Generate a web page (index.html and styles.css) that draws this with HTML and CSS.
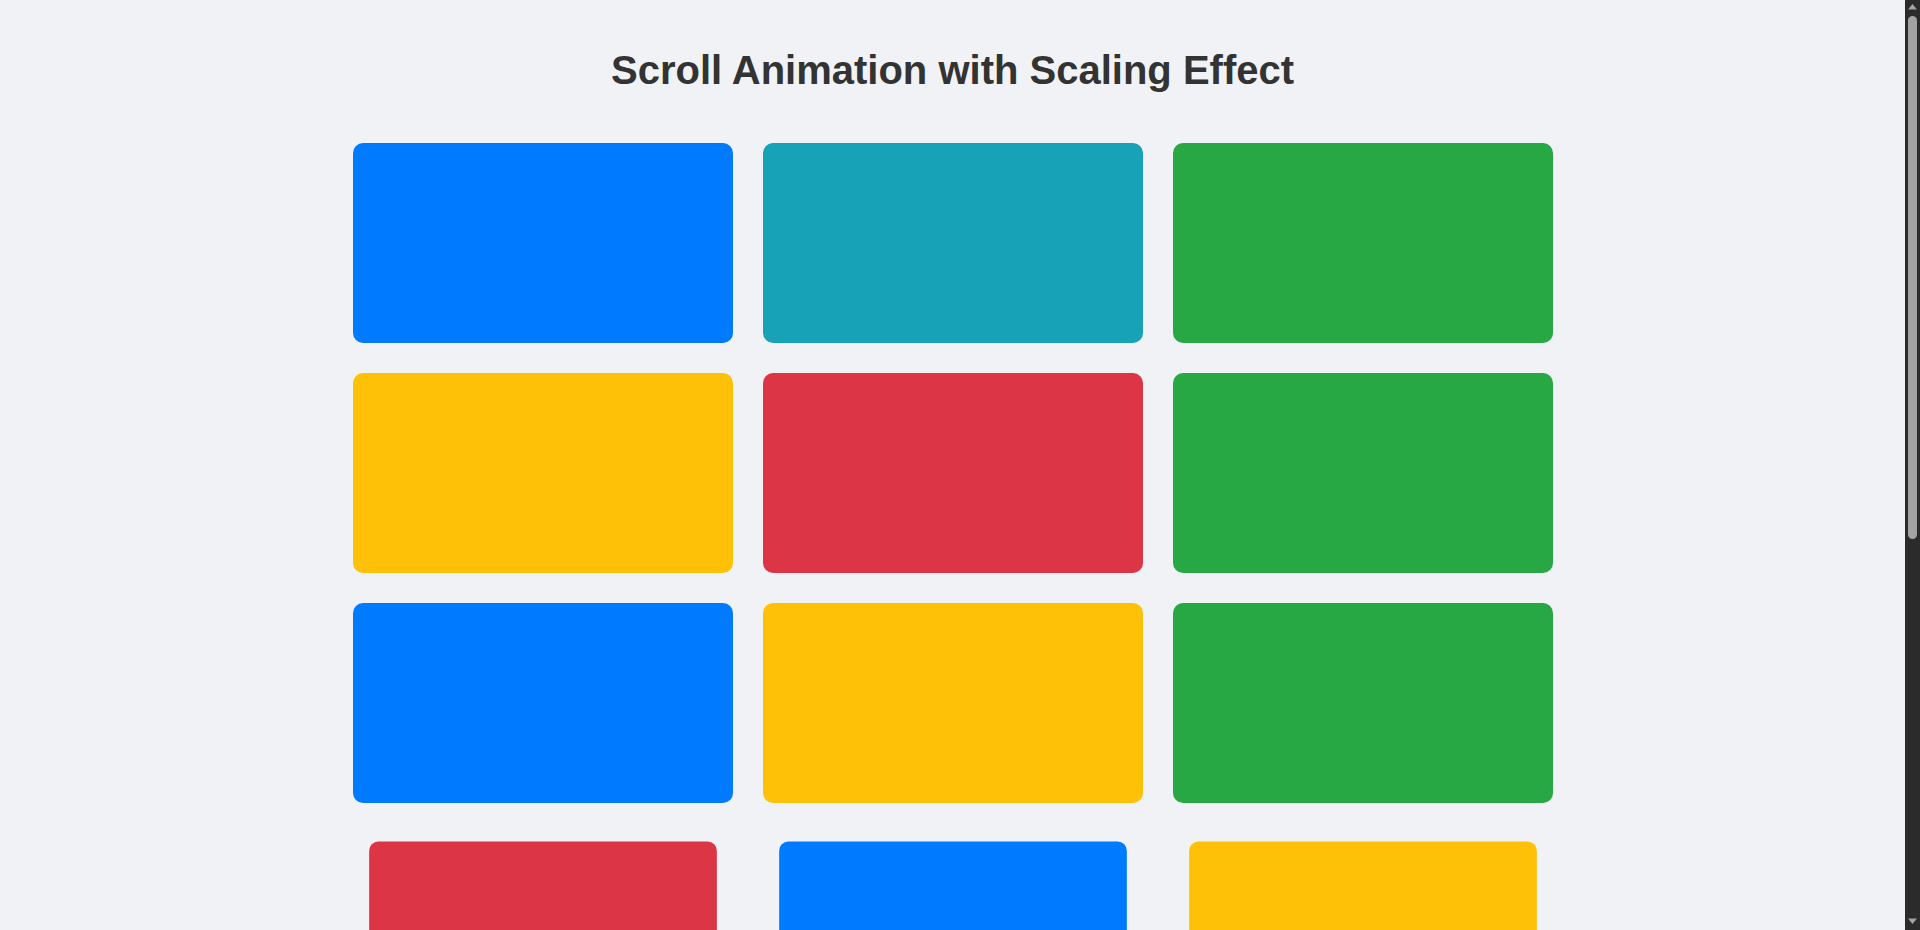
FILE: index.html
```html
<!DOCTYPE html>
<html lang="en">
<head>
<meta charset="UTF-8">
<title>Scroll Animation with Scaling Effect</title>
<link rel="stylesheet" href="styles.css">
</head>
<body>
  <h1 class="title">Scroll Animation with Scaling Effect</h1>
  <div class="grid">
    <div class="card blue"></div>
    <div class="card teal"></div>
    <div class="card green"></div>
    <div class="card yellow"></div>
    <div class="card red"></div>
    <div class="card green"></div>
    <div class="card blue"></div>
    <div class="card yellow"></div>
    <div class="card green"></div>
    <div class="card red shrunk"></div>
    <div class="card blue shrunk"></div>
    <div class="card yellow shrunk"></div>
    <div class="card teal shrunk"></div>
    <div class="card green shrunk"></div>
    <div class="card red shrunk"></div>
    <div class="card yellow shrunk"></div>
    <div class="card blue shrunk"></div>
    <div class="card teal shrunk"></div>
  </div>

  <div class="scrollbar" aria-hidden="true">
    <div class="sb-button">
      <svg width="15" height="15" viewBox="0 0 15 15"><polygon points="3,9.5 12,9.5 7.5,4" fill="#a3a3a3"/></svg>
    </div>
    <div class="sb-track">
      <div class="sb-thumb"></div>
    </div>
    <div class="sb-button">
      <svg width="15" height="15" viewBox="0 0 15 15"><polygon points="3,3.5 12,3.5 7.5,9" fill="#a3a3a3"/></svg>
    </div>
  </div>
</body>
</html>
```

FILE: styles.css
```css
html, body {
  margin: 0;
  padding: 0;
}

body {
  background: #f0f2f5;
  font-family: "Liberation Sans", Arial, sans-serif;
  padding: 20px 15px 20px 0;
}

.title {
  margin: 27px 0 50px;
  text-align: center;
  font-size: 40px;
  font-weight: bold;
  color: #333333;
  line-height: 46px;
}

.grid {
  max-width: 1200px;
  margin: 0 auto 90px;
  display: grid;
  grid-template-columns: repeat(3, 1fr);
  gap: 30px;
}

.card {
  height: 200px;
  border-radius: 10px;
}

.shrunk {
  transform: scale(0.915);
}

.blue { background: #007bff; }
.teal { background: #17a2b8; }
.green { background: #28a745; }
.yellow { background: #ffc107; }
.red { background: #dc3545; }

/* browser scrollbar overlay */
.scrollbar {
  position: fixed;
  top: 0;
  right: 0;
  width: 15px;
  height: 100vh;
  background: #2b2b2b;
  display: flex;
  flex-direction: column;
}

.sb-button {
  height: 15px;
  flex: 0 0 15px;
}

.sb-button svg {
  display: block;
}

.sb-track {
  flex: 1;
  display: flex;
  flex-direction: column;
  align-items: center;
  padding-top: 1px;
}

.sb-thumb {
  width: 9px;
  height: 523px;
  border-radius: 5px;
  background: #a3a3a3;
}
```
